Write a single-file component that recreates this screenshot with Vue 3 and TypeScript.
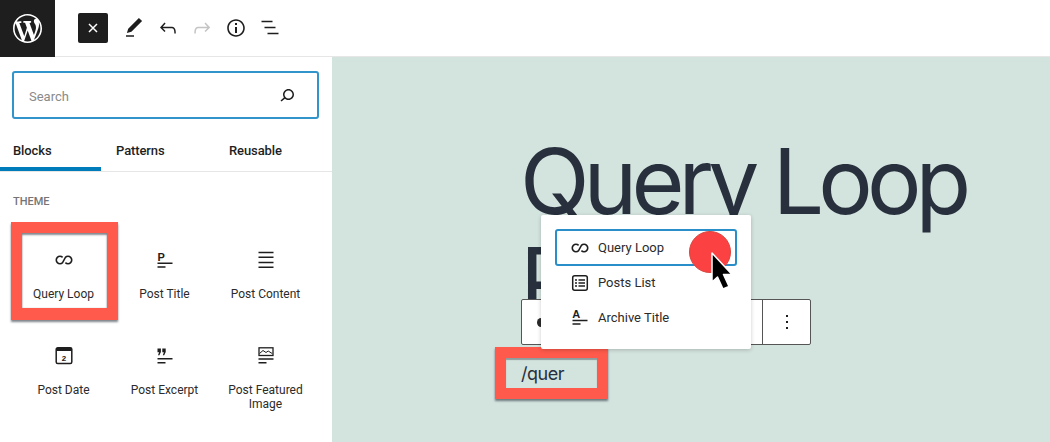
<script setup lang="ts">
interface Block { label: string; id: string }
const blocks: Block[] = [
  { label: 'Query Loop', id: 'loop' },
  { label: 'Post Title', id: 'title' },
  { label: 'Post Content', id: 'content' },
  { label: 'Post Date', id: 'date' },
  { label: 'Post Excerpt', id: 'excerpt' },
  { label: 'Post Featured Image', id: 'image' },
]
const loopPath = 'M10.6 9.4A3.7 3.7 0 1 0 10.6 14.6L13.4 9.4A3.7 3.7 0 1 1 13.4 14.6'
</script>

<template>
  <div class="page">
    <header class="topbar">
      <div class="logo">
        <svg width="29" height="29" viewBox="0 0 20 20">
          <path fill="#fff" d="M20 10c0-5.510-4.490-10-10-10C4.480 0 0 4.490 0 10c0 5.520 4.480 10 10 10 5.510 0 10-4.480 10-10zM7.780 15.370L4.370 6.220c.55-.02 1.170-.08 1.170-.08.5-.06.44-1.130-.06-1.110 0 0-1.450.11-2.370.11-.18 0-.37 0-.58-.01C4.120 2.690 6.890 1.030 10 1.030c2.320 0 4.430.87 6.030 2.340-.68-.11-1.650.39-1.650 1.580 0 .74.45 1.360.9 2.100.35.61.55 1.360.55 2.460 0 1.490-1.400 5-1.400 5l-3.030-8.370c.54-.02.82-.17.82-.17.5-.05.44-1.250-.06-1.220 0 0-1.440.12-2.380.12-.87 0-2.330-.12-2.330-.12-.5-.03-.56 1.200-.06 1.220l.92.08 1.260 3.410zM17.410 10c.24-.64.74-1.870.43-4.250.7 1.290 1.050 2.710 1.050 4.250 0 3.290-1.730 6.240-4.400 7.780.97-2.590 1.940-5.200 2.920-7.780zM6.100 18.090C3.120 16.650 1.110 13.530 1.110 10c0-1.300.23-2.480.72-3.590C3.250 10.300 4.670 14.200 6.100 18.090zm4.030-6.630l2.580 6.980c-.86.29-1.760.45-2.710.45-.79 0-1.570-.11-2.290-.33.81-2.370 1.620-4.720 2.420-7.100z" />
        </svg>
      </div>
      <nav class="tools">
        <button class="close">
          <svg width="14" height="14" viewBox="0 0 14 14"><path d="M3 3l8 8M11 3l-8 8" stroke="#fff" stroke-width="1.5" fill="none" /></svg>
        </button>
        <svg class="tool" width="24" height="24" viewBox="0 0 24 24"><path fill="#1e1e1e" d="M20.1 5.100L16.900 2 6.200 12.700l-1.300 4.400 4.500-1.300L20.100 5.100zM4 20.800h8v-1.500H4v1.500z" /></svg>
        <svg class="tool" width="24" height="24" viewBox="0 0 24 24"><path fill="#1e1e1e" d="M18.300 11.700c-.6-.6-1.400-.9-2.300-.9H6.700l2.900-3.300-1.100-1-4.500 5L8.500 16l1-1-2.700-2.700H16c.5 0 .9.200 1.300.5 1 1 1 3.400 1 4.500v.3h1.500v-.2c0-1.500 0-4.300-1.500-5.700z" /></svg>
        <svg class="tool" width="24" height="24" viewBox="0 0 24 24"><path fill="#c4c4c4" d="M15.600 6.500l-1.100 1 2.900 3.300H8c-.9 0-1.700.3-2.300.9-1.400 1.500-1.400 4.200-1.400 5.600v.2h1.500v-.3c0-1.100 0-3.500 1-4.500.3-.3.700-.5 1.300-.5h9.200L14.500 15l1.100 1.100 4.600-4.600-4.600-5z" /></svg>
        <svg class="tool" width="24" height="24" viewBox="0 0 24 24"><path fill="#1e1e1e" d="M12 3.200c-4.800 0-8.800 3.900-8.800 8.800 0 4.800 3.900 8.800 8.800 8.800 4.800 0 8.800-3.900 8.800-8.800 0-4.800-4-8.800-8.800-8.800zm0 16c-4 0-7.200-3.300-7.200-7.200C4.800 8 8 4.800 12 4.800s7.200 3.300 7.200 7.200c0 4-3.200 7.200-7.200 7.200zM11 17h2v-6h-2v6zm0-8h2V7h-2v2z" /></svg>
        <svg class="tool" width="24" height="24" viewBox="0 0 24 24" fill="none" stroke="#1e1e1e" stroke-width="1.5"><path d="M3.500 5.500h11M6.500 11.500h11M9.500 17.500h11" /></svg>
      </nav>
    </header>

    <div class="main">
      <aside class="sidebar">
        <div class="search">
          <span class="placeholder">Search</span>
          <svg width="24" height="24" viewBox="0 0 24 24"><path fill="#1e1e1e" d="M13.500 6C10.500 6 8 8.500 8 11.500c0 1.100.3 2.100.9 3l-3.400 3 1 1.100 3.400-2.900c1 .9 2.200 1.400 3.600 1.400 3 0 5.500-2.500 5.500-5.500C19 8.500 16.500 6 13.500 6zm0 9.500c-2.200 0-4-1.800-4-4s1.800-4 4-4 4 1.800 4 4-1.800 4-4 4z" /></svg>
        </div>
        <div class="tabs">
          <span class="tab active">Blocks</span>
          <span class="tab">Patterns</span>
          <span class="tab">Reusable</span>
        </div>
        <div class="section">
          <h2>THEME</h2>
          <div class="grid">
            <div v-for="b in blocks" :key="b.id" class="item" :class="{ marked: b.id === 'loop' }">
              <svg width="24" height="24" viewBox="0 0 24 24" fill="none" stroke="#1e1e1e">
                <path v-if="b.id === 'loop'" :d="loopPath" stroke-width="1.6" />
                <template v-else-if="b.id === 'title'">
                  <path d="M4.500 15.300h15M4.500 19h8" stroke-width="1.5" />
                  <text x="4.500" y="12.500" class="icon-letter">P</text>
                </template>
                <path v-else-if="b.id === 'content'" d="M4.500 4.500h15M4.500 9.300h15M4.500 14.500h15M4.500 19.300h15" stroke-width="1.5" />
                <template v-else-if="b.id === 'date'">
                  <rect x="4.200" y="3.800" width="15.600" height="15.800" rx="1.500" stroke-width="1.5" />
                  <path d="M4.200 5.500h15.600" stroke-width="3" />
                  <text x="12" y="16.700" class="date-num" text-anchor="middle">2</text>
                </template>
                <template v-else-if="b.id === 'excerpt'">
                  <path d="M4.500 14.800h15M4.500 18.800h8" stroke-width="1.5" />
                  <path fill="#1e1e1e" stroke="none" d="M4.500 4.500h3.400v3.500l-1.500 3.300H5l1.100-3.100H4.500zM9.300 4.500h3.400v3.500l-1.500 3.300H9.800l1.100-3.100H9.300z" />
                </template>
                <template v-else>
                  <rect x="5" y="3.800" width="14" height="7.700" stroke-width="1.3" />
                  <path d="M5.500 9.500l3.500-3 3 2 2.200-1.500 4 2.500" stroke-width="1" />
                  <path d="M4.500 15h15M4.500 18.800h8" stroke-width="1.5" />
                </template>
              </svg>
              <span class="label">{{ b.label }}</span>
            </div>
          </div>
        </div>
      </aside>

      <section class="canvas">
        <h1 class="title">Query Loop<br />P</h1>
        <div class="block-bar">
          <span class="peek"></span>
          <span class="grow"></span>
          <span class="more">
            <svg width="24" height="24" viewBox="0 0 24 24"><path fill="#1e1e1e" d="M13 19h-2v-2h2v2zm0-6h-2v-2h2v2zm0-6h-2V5h2v2z" /></svg>
          </span>
        </div>
        <div class="slash"><span>/quer</span></div>
        <div class="popover">
          <div class="option selected">
            <svg width="24" height="24" viewBox="0 0 24 24" fill="none" stroke="#1e1e1e"><path :d="loopPath" stroke-width="1.6" /></svg>
            <span>Query Loop</span>
          </div>
          <div class="option">
            <svg width="24" height="24" viewBox="0 0 24 24" fill="none" stroke="#1e1e1e" stroke-width="1.5">
              <rect x="4.700" y="4.700" width="14.600" height="14.600" rx="2" />
              <path d="M10.500 9h6.500M10.500 12h6.500M10.500 15h6.500M7 9h2M7 12h2M7 15h2" />
            </svg>
            <span>Posts List</span>
          </div>
          <div class="option">
            <svg width="24" height="24" viewBox="0 0 24 24" fill="none" stroke="#1e1e1e" stroke-width="1.5">
              <path d="M4.500 15.500h15M4.500 19h8" />
              <text x="4.300" y="12.700" class="icon-letter">A</text>
            </svg>
            <span>Archive Title</span>
          </div>
        </div>
        <div class="dot"></div>
        <svg class="cursor" width="30" height="42" viewBox="0 0 30 42">
          <path d="M4 3v29l5.500-5 5.500 12 6-2.500-5.500-12H24z" fill="#000" stroke="#fff" stroke-width="1.5" stroke-linejoin="round" />
        </svg>
      </section>
    </div>
  </div>
</template>

<style>
html, body { margin: 0; background: #fff; }
</style>

<style scoped>
.page {
  width: 1050px;
  height: 442px;
  overflow: hidden;
  font-family: Roboto, "Liberation Sans", sans-serif;
  color: #1e1e1e;
  display: flex;
  flex-direction: column;
}
.topbar {
  height: 57px;
  box-sizing: border-box;
  border-bottom: 1px solid #e6e6e6;
  display: flex;
  flex: none;
}
.logo {
  width: 55px;
  height: 57px;
  background: #1e1e1e;
  display: flex;
  align-items: center;
  justify-content: center;
}
.tools {
  display: flex;
  align-items: center;
  height: 56px;
  margin-left: 23px;
}
.close {
  width: 30px;
  height: 30px;
  padding: 0;
  border: 0;
  border-radius: 2px;
  background: #1e1e1e;
  display: flex;
  align-items: center;
  justify-content: center;
  margin-right: 14px;
}
.tool { margin-right: 10px; }
.main { display: flex; flex: 1; min-height: 0; }
.sidebar {
  width: 332px;
  flex: none;
  background: #fff;
  box-sizing: border-box;
  display: flex;
  flex-direction: column;
}
.search {
  margin: 14px 13px 0 12px;
  height: 48px;
  box-sizing: border-box;
  border: 2px solid #3195cc;
  border-radius: 3px;
  display: flex;
  align-items: center;
  justify-content: space-between;
  padding: 0 18px 0 15px;
}
.placeholder { font-size: 13px; color: #8a8a8a; padding-top: 2px; }
.tabs {
  display: grid;
  grid-template-columns: 101px 100px 1fr;
  height: 52px;
  margin-top: 1px;
  border-bottom: 1px solid #e6e6e6;
  box-sizing: border-box;
  font-size: 13px;
  font-weight: 500;
  letter-spacing: -.1px;
}
.tab { display: flex; align-items: center; padding-top: 9px; box-sizing: border-box; }
.tab:first-child { padding-left: 13px; }
.tab:nth-child(2) { padding-left: 15px; }
.tab:nth-child(3) { padding-left: 28px; }
.tab.active { box-shadow: inset 0 -4px 0 #007cba; }
.section { padding: 23px 0 0 0; }
h2 {
  margin: 0 0 0 13px;
  font-size: 11px;
  line-height: 14px;
  font-weight: 500;
  color: #757575;
}
.grid {
  display: grid;
  grid-template-columns: repeat(3, 101px);
  grid-auto-rows: 96px;
  margin: 13px 0 0 13px;
}
.item {
  display: flex;
  flex-direction: column;
  align-items: center;
  text-align: center;
  padding-top: 26px;
  box-sizing: border-box;
  position: relative;
}
.item svg { flex: none; }
.item.marked::after {
  content: "";
  position: absolute;
  left: -2px;
  top: 0;
  width: 107px;
  height: 98px;
  box-sizing: border-box;
  border: 11px solid #ff5a4b;
  border-bottom-width: 12px;
  box-shadow: 0 2px 2px rgba(40,50,60,.6), inset 0 2px 2px rgba(40,50,60,.55), inset 0 0 1px rgba(40,50,60,.5);
}
.label {
  font-size: 12px;
  line-height: 14px;
  margin-top: 15px;
  color: #2b2b2b;
  width: 80px;
}
.date-num { font: 700 8px "Liberation Mono", monospace; fill: #1e1e1e; stroke: none; }
.icon-letter { font: 700 11px "Liberation Sans", sans-serif; fill: #1e1e1e; stroke: none; }
.canvas {
  flex: 1;
  background: #d3e3de;
  position: relative;
  overflow: hidden;
}
.title {
  margin: 0;
  position: absolute;
  left: 188px;
  top: 75px;
  font-family: Inter, "Liberation Sans", sans-serif;
  font-size: 91px;
  line-height: 99px;
  font-weight: 400;
  letter-spacing: -6px;
  color: #28303d;
  white-space: nowrap;
}
.block-bar {
  position: absolute;
  left: 189px;
  top: 242px;
  width: 290px;
  height: 46px;
  box-sizing: border-box;
  background: #fff;
  border: 1px solid #555;
  border-radius: 2px;
  display: flex;
  align-items: center;
}
.peek {
  width: 8px;
  height: 9px;
  margin-left: 15px;
  border-radius: 50%;
  background: #2b2b2b;
}
.grow { flex: 1; }
.more {
  width: 47px;
  align-self: stretch;
  border-left: 1px solid #555;
  display: flex;
  align-items: center;
  justify-content: center;
}
.slash {
  position: absolute;
  left: 163px;
  top: 290px;
  width: 113px;
  height: 52px;
  box-sizing: border-box;
  border: 11px solid #ff5a4b;
  box-shadow: 0 2px 2px rgba(40,50,60,.6), inset 0 2px 1px rgba(40,50,60,.4);
  display: flex;
  align-items: center;
}
.slash span {
  font-family: Inter, "Liberation Sans", sans-serif;
  font-size: 18px;
  letter-spacing: -.5px;
  color: #28303d;
  margin-left: 15px;
}
.popover {
  position: absolute;
  left: 209px;
  top: 158px;
  width: 210px;
  height: 134px;
  box-sizing: border-box;
  background: #fff;
  border-radius: 2px;
  box-shadow: 0 1px 4px rgba(0,0,0,.2);
  padding: 14px;
}
.option {
  height: 36px;
  margin-bottom: -1.5px;
  padding-left: 11px;
  box-sizing: border-box;
  display: flex;
  align-items: center;
  gap: 6px;
  font-size: 13px;
  border-radius: 3px;
  border: 2px solid transparent;
  color: #2b2b2b;
}
.option.selected { height: 37px; border-color: #2a8fc8; }
.dot {
  position: absolute;
  left: 357px;
  top: 174px;
  width: 42px;
  height: 42px;
  box-sizing: border-box;
  border: 1px solid #d9473f;
  border-radius: 50%;
  background: #fb4141;
}
.cursor { position: absolute; left: 376px; top: 193px; }
</style>
